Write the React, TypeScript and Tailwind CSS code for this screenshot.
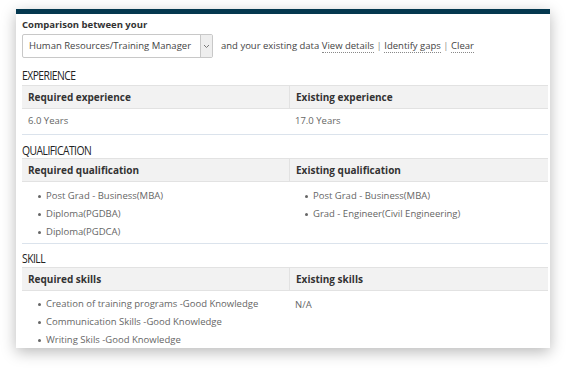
import React from "react";

const font = { fontFamily: '"Open Sans", "Noto Sans", sans-serif' };

function SectionTitle({ children }: { children: React.ReactNode }) {
  return (
    <div className="text-[12px] leading-[14px] text-[#222] uppercase tracking-[-0.6px] origin-left scale-x-[0.86] whitespace-nowrap">
      {children}
    </div>
  );
}

function HeaderRow({ left, right }: { left: string; right: string }) {
  return (
    <div className="grid grid-cols-[267px_1fr] bg-[#f2f2f2] border-t border-b border-[#e2e2e2] h-[24px] items-center text-[10px] font-bold text-[#333] whitespace-nowrap">
      <div className="pl-[6px] h-full flex items-center">{left}</div>
      <div className="pl-[6px] h-full flex items-center border-l border-[#e2e2e2]">{right}</div>
    </div>
  );
}

function Bullets({ items, top }: { items: string[]; top: string }) {
  return (
    <ul className={`flex flex-col gap-[5px] pl-[16px] ${top}`}>
      {items.map((t) => (
        <li key={t} className="flex items-center gap-[5px] h-[13px] whitespace-nowrap">
          <span className="w-[3px] h-[3px] rounded-full bg-[#666] inline-block shrink-0" />
          <span>{t}</span>
        </li>
      ))}
    </ul>
  );
}

export default function App() {
  return (
    <div className="w-[568px] h-[368px] bg-white relative overflow-hidden" style={font}>
      <div className="absolute left-[16px] top-[9px] w-[534px] h-[339px] bg-white shadow-[0_4px_14px_rgba(0,0,0,0.28)] overflow-hidden">
        <div className="h-[5px] bg-[#04384f]" />
        <div className="pl-[6px] pr-[2px]">
          <div className="text-[9.5px] font-bold text-[#333] mt-[4px] leading-[14px] whitespace-nowrap">Comparison between your</div>
          <div className="flex items-center mt-[2px]">
            <div className="w-[191px] h-[24px] border border-[#c8c8c8] rounded-[2px] flex items-stretch bg-white">
              <div className="flex-1 flex items-center pl-[6px] text-[9.5px] text-[#444] whitespace-nowrap">Human Resources/Training Manager</div>
              <div className="w-[12px] border-l border-[#c8c8c8] bg-[#eeeeee] flex items-center justify-center">
                <svg width="7" height="5" viewBox="0 0 7 5"><path d="M1 1l2.5 2.5L6 1" fill="none" stroke="#777" strokeWidth="1" /></svg>
              </div>
            </div>
            <div className="ml-[8px] text-[9.5px] text-[#444] whitespace-nowrap">
              and your existing data{" "}
              <span className="border-b border-dotted border-[#888]">View details</span>
              <span className="text-[#888]"> | </span>
              <span className="border-b border-dotted border-[#888]">Identify gaps</span>
              <span className="text-[#888]"> | </span>
              <span className="border-b border-dotted border-[#888]">Clear</span>
            </div>
          </div>

          <div className="mt-[11px]">
            <SectionTitle>Experience</SectionTitle>
          </div>
          <div className="mt-[2px]">
            <HeaderRow left="Required experience" right="Existing experience" />
            <div className="grid grid-cols-[267px_1fr] h-[26px] items-center text-[9.5px] text-[#666] border-b border-[#dbe3ec]">
              <div className="pl-[6px]">6.0 Years</div>
              <div className="pl-[6px]">17.0 Years</div>
            </div>
          </div>

          <div className="mt-[9px]">
            <SectionTitle>Qualification</SectionTitle>
          </div>
          <div>
            <HeaderRow left="Required qualification" right="Existing qualification" />
            <div className="grid grid-cols-[267px_1fr] h-[62px] text-[9.5px] text-[#666] border-b border-[#dbe3ec]">
              <Bullets top="pt-[8px]" items={["Post Grad - Business(MBA)", "Diploma(PGDBA)", "Diploma(PGDCA)"]} />
              <Bullets top="pt-[8px]" items={["Post Grad - Business(MBA)", "Grad - Engineer(Civil Engineering)"]} />
            </div>
          </div>

          <div className="mt-[8px]">
            <SectionTitle>Skill</SectionTitle>
          </div>
          <div className="mt-[1px]">
            <HeaderRow left="Required skills" right="Existing skills" />
            <div className="grid grid-cols-[267px_1fr] text-[9.5px] text-[#666]">
              <Bullets
                top="pt-[7px]"
                items={[
                  "Creation of training programs -Good Knowledge",
                  "Communication Skills -Good Knowledge",
                  "Writing Skils -Good Knowledge",
                ]}
              />
              <div className="pl-[6px] pt-[7px] leading-[13px]">N/A</div>
            </div>
          </div>
        </div>
      </div>
    </div>
  );
}
